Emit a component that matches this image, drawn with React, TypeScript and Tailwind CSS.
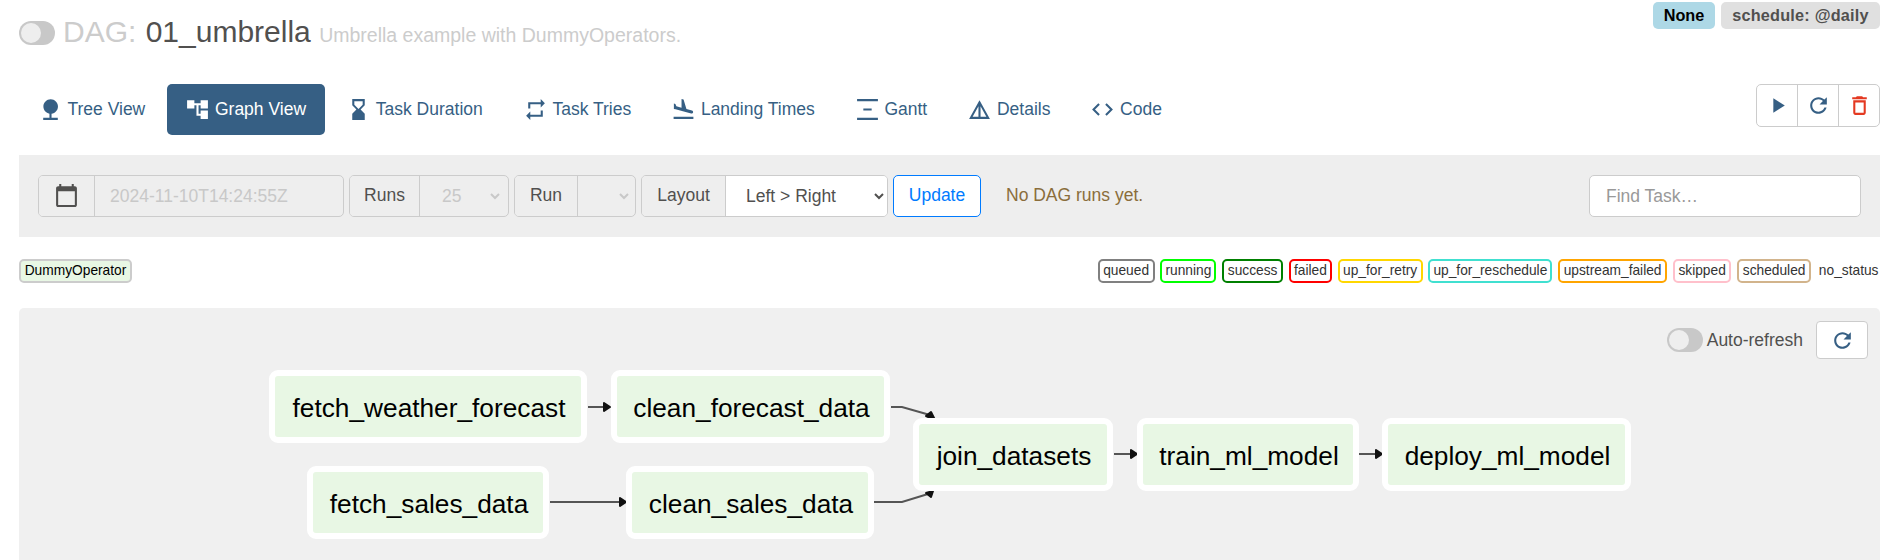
import React from "react";

const P = {
  nature: "M13 16.12c3.47-.41 6.17-3.36 6.17-6.95 0-3.87-3.13-7-7-7s-7 3.13-7 7c0 3.47 2.52 6.34 5.83 6.89V20H5v2h14v-2h-6v-3.88z",
  tree: "M22 11V3h-7v3H9V3H2v8h7V8h2v10h4v3h7v-8h-7v3h-2V8h2v3z",
  hourglass: "M18 22l-.01-6L14 12l3.99-4.01L18 2H6v6l4 4-4 3.99V22h12zM8 7.5V4h8v3.5l-4 4-4-4z",
  repeat: "M7 7h10v3l4-4-4-4v3H5v6h2V7zm10 10H7v-3l-4 4 4 4v-3h12v-6h-2v4z",
  land: "M2.5 19h19v2h-19zm7.18-5.73l4.35 1.16 5.31 1.42c.8.21 1.62-.26 1.84-1.06.21-.8-.26-1.62-1.06-1.84l-5.31-1.42-2.76-9.02L10.12 2v8.28L5.15 8.95l-.93-2.32-1.45-.39v5.17l1.6.43 5.31 1.43z",
  gantt: "M2 22v-2h20v2H2zM2 2v2h20V2H2zm6 9v2h8v-2H8z",
  details: "M12 3L2 21h20L12 3zm1 5.92L18.6 19H13V8.92zm-2 0V19H5.4L11 8.92z",
  code: "M9.4 16.6L4.8 12l4.6-4.6L8 6l-6 6 6 6 1.4-1.4zm5.2 0l4.6-4.6-4.6-4.6L16 6l6 6-6 6-1.4-1.4z",
  play: "M8 5v14l11-7z",
  refresh: "M17.65 6.35C16.2 4.9 14.21 4 12 4c-4.42 0-7.99 3.58-7.99 8s3.57 8 7.99 8c3.73 0 6.84-2.55 7.73-6h-2.08c-.82 2.33-3.04 4-5.65 4-3.31 0-6-2.69-6-6s2.69-6 6-6c1.66 0 3.14.69 4.22 1.78L13 11h7V4l-2.35 2.35z",
  trash: "M6 19c0 1.1.9 2 2 2h8c1.1 0 2-.9 2-2V7H6v12zM8 9h8v10H8V9zm7.5-5l-1-1h-5l-1 1H5v2h14V4z",
  calendar: "M20 3h-1V1h-2v2H7V1H5v2H4c-1.1 0-2 .9-2 2v16c0 1.1.9 2 2 2h16c1.1 0 2-.9 2-2V5c0-1.1-.9-2-2-2zm0 18H4V8h16v13z",
};

function Icon({ d, className = "" }: { d: string; className?: string }) {
  return (
    <svg viewBox="0 0 24 24" fill="currentColor" className={"w-[25px] h-[25px] shrink-0 " + className}>
      <path d={d} />
    </svg>
  );
}

function Toggle() {
  return (
    <div className="flex items-center w-[36px] h-[24px] rounded-full bg-[#c8c8c8] pl-[2px] shrink-0">
      <div className="w-[20px] h-[20px] rounded-full bg-[#eeeeee]" />
    </div>
  );
}

function NavItem({ icon, label, active }: { icon: string; label: string; active?: boolean }) {
  return (
    <div
      className={
        "flex items-center h-[51px] px-[18.75px] rounded-[5px] " +
        (active ? "bg-[#365f84] text-white" : "text-[#365f84]")
      }
    >
      <Icon d={icon} className="mr-[4.7px]" />
      <span>{label}</span>
    </div>
  );
}

function Addon({ children, className = "" }: { children: React.ReactNode; className?: string }) {
  return (
    <div className={"flex items-center justify-center h-full pb-[1px] bg-[#eeeeee] text-[#51504f] " + className}>{children}</div>
  );
}

function Legend({ label, box }: { label: string; box: string }) {
  return (
    <span className={"flex items-center justify-center h-[24px] rounded-[5px] border-[2.5px] bg-white " + box}>{label}</span>
  );
}

function Node({ label, pos }: { label: string; pos: string }) {
  return (
    <div
      className={
        "absolute h-[73px] pt-[5px] pl-[2px] flex items-center justify-center rounded-[9px] border-[6px] border-white bg-[#e8f7e4] text-black text-[26.25px] " +
        pos
      }
    >
      {label}
    </div>
  );
}

function Edges() {
  return (
    <svg className="absolute left-0 top-0" width="1861" height="252" viewBox="19 308 1861 252" fill="none">
      <g stroke="#555555" strokeWidth="2">
        <path d="M588 407H605" />
        <path d="M891 407H902L930 415" />
        <path d="M550 502H620" />
        <path d="M874 502H902L928 494" />
        <path d="M1114 454H1132" />
        <path d="M1359 454H1377" />
      </g>
      <g fill="#111111" stroke="#111111" strokeWidth="2" strokeLinejoin="round">
        <path d="M604 403L610 407L604 411Z" />
        <path d="M620 498L626 502L620 506Z" />
        <path d="M1131 450L1137 454L1131 458Z" />
        <path d="M1376 450L1382 454L1376 458Z" />
        <path d="M926 416L931 412L935 420Z" />
        <path d="M926 493L933 491L931 497Z" />
      </g>
    </svg>
  );
}

export default function App() {
  return (
    <div className="w-[1890px] h-[560px] overflow-hidden bg-white pl-[19px] pr-[10px] flex flex-col text-[17.5px] text-[#51504f] [font-family:'Liberation_Sans',Arial,sans-serif]">
      <div className="flex justify-between items-start h-[84px] shrink-0">
        <div className="flex items-center mt-[21px] h-[24px]">
          <Toggle />
          <div className="ml-[8px] text-[30px] leading-[24px] whitespace-pre">
            <span className="text-[#cccccc]">DAG: </span>
            <span className="ml-[1px] text-[#51504f]">01_umbrella </span>
            <span className="text-[19.5px] text-[#cccccc]">Umbrella example with DummyOperators.</span>
          </div>
        </div>
        <div className="flex mt-[2px] gap-[6px] text-[16.25px] font-bold">
          <span className="flex items-center justify-center w-[62px] h-[27px] rounded-[5px] bg-[#add8e6] text-black">None</span>
          <span className="flex items-center justify-center w-[159px] h-[27px] rounded-[5px] bg-[#e0e0e0] text-[#51504f] tracking-[0.2px]">schedule: @daily</span>
        </div>
      </div>

      <div className="flex justify-between items-start h-[51px] shrink-0">
        <div className="flex gap-[2.5px]">
          <NavItem icon={P.nature} label="Tree View" />
          <NavItem icon={P.tree} label="Graph View" active />
          <NavItem icon={P.hourglass} label="Task Duration" />
          <NavItem icon={P.repeat} label="Task Tries" />
          <NavItem icon={P.land} label="Landing Times" />
          <NavItem icon={P.gantt} label="Gantt" />
          <NavItem icon={P.details} label="Details" />
          <NavItem icon={P.code} label="Code" />
        </div>
        <div className="flex h-[43px] w-[124px] rounded-[5px] border border-[#cccccc] text-[#365f84]">
          <div className="flex items-center justify-center w-[41px] border-r border-[#cccccc]">
            <Icon d={P.play} />
          </div>
          <div className="flex items-center justify-center w-[41px] border-r border-[#cccccc]">
            <Icon d={P.refresh} />
          </div>
          <div className="flex items-center justify-center flex-1 text-[#e43921]">
            <Icon d={P.trash} />
          </div>
        </div>
      </div>

      <div className="flex items-center mt-[20px] h-[82px] shrink-0 bg-[#eeeeee] pl-[19px] pr-[19px]">
        <div className="flex items-center h-[42px] w-[306px] rounded-[5px] border border-[#cccccc] overflow-hidden">
          <Addon className="w-[56px] border-r border-[#cccccc]">
            <Icon d={P.calendar} className="text-[#51504f]" />
          </Addon>
          <div className="flex-1 h-full flex items-center pl-[15px] text-[#c8c8c8]">2024-11-10T14:24:55Z</div>
        </div>
        <div className="flex items-center h-[42px] w-[160px] ml-[5px] rounded-[5px] border border-[#cccccc] overflow-hidden bg-[#eeeeee]">
          <Addon className="w-[70px] border-r border-[#cccccc]">Runs</Addon>
          <select disabled defaultValue="25" className="flex-1 min-w-0 h-full mr-[5px] pl-[18px] bg-[#eeeeee] text-[#c8c8c8]">
            <option>25</option>
          </select>
        </div>
        <div className="flex items-center h-[42px] w-[122px] ml-[5px] rounded-[5px] border border-[#cccccc] overflow-hidden bg-[#eeeeee]">
          <Addon className="w-[63px] border-r border-[#cccccc]">Run</Addon>
          <select disabled className="flex-1 min-w-0 h-full mr-[3px] bg-[#eeeeee] text-[#c8c8c8]">
            <option></option>
          </select>
        </div>
        <div className="flex items-center h-[42px] w-[247px] ml-[5px] rounded-[5px] border border-[#cccccc] overflow-hidden">
          <Addon className="w-[84px] border-r border-[#cccccc]">Layout</Addon>
          <select defaultValue="LR" className="flex-1 min-w-0 h-full pl-[16px] bg-white text-[#51504f]">
            <option value="LR">Left &gt; Right</option>
          </select>
        </div>
        <button className="h-[42px] w-[88px] ml-[5px] pb-[1px] rounded-[5px] border border-[#007bff] bg-white text-[#007bff]">Update</button>
        <span className="ml-[25px] pb-[1px] text-[#8a6d3b]">No DAG runs yet.</span>
        <input
          placeholder="Find Task…"
          className="ml-auto h-[42px] w-[272px] rounded-[5px] border border-[#cccccc] bg-white px-[16px] placeholder:text-[#999999] outline-none"
        />
      </div>

      <div className="flex justify-between items-center mt-[22px] h-[24px] shrink-0 text-[13.75px] text-[#333333]">
        <span className="flex items-center h-[24px] w-[113px] justify-center rounded-[5px] border-[2.5px] border-[#cccccc] bg-[#e8f7e4] text-black">DummyOperator</span>
        <div className="flex items-center gap-[5.75px]">
          <Legend label="queued" box="w-[57px] border-[#808080]" />
          <Legend label="running" box="w-[56px] border-[#00ff00]" />
          <Legend label="success" box="w-[61px] border-[#008000]" />
          <Legend label="failed" box="w-[43px] border-[#ff0000]" />
          <Legend label="up_for_retry" box="w-[85px] border-[#ffd700]" />
          <Legend label="up_for_reschedule" box="w-[124px] border-[#40e0d0]" />
          <Legend label="upstream_failed" box="w-[109px] border-[#ffa500]" />
          <Legend label="skipped" box="w-[58.5px] border-[#ffc0cb]" />
          <Legend label="scheduled" box="w-[74px] border-[#d2b48c]" />
          <span className="pl-[2px] pr-[1.5px]">no_status</span>
        </div>
      </div>

      <div className="relative mt-[25px] flex-1 bg-[#f0f0f0] rounded-t-[5px]">
        <div className="flex justify-end items-center pt-[13px] pr-[12px] text-[#51504f]">
          <Toggle />
          <span className="ml-[4px] mr-[13px]">Auto-refresh</span>
          <div className="flex items-center justify-center w-[52px] h-[38px] rounded-[4px] border border-[#cccccc] bg-white text-[#365f84]">
            <Icon d={P.refresh} />
          </div>
        </div>
        <Edges />
        <Node label="fetch_weather_forecast" pos="left-[250px] top-[62px] w-[318px]" />
        <Node label="clean_forecast_data" pos="left-[592px] top-[62px] w-[279px]" />
        <Node label="fetch_sales_data" pos="left-[288px] top-[158px] w-[242px]" />
        <Node label="clean_sales_data" pos="left-[607px] top-[158px] w-[248px]" />
        <Node label="join_datasets" pos="left-[894px] top-[110px] w-[200px]" />
        <Node label="train_ml_model" pos="left-[1118px] top-[110px] w-[222px]" />
        <Node label="deploy_ml_model" pos="left-[1363px] top-[110px] w-[249px]" />
      </div>
    </div>
  );
}
